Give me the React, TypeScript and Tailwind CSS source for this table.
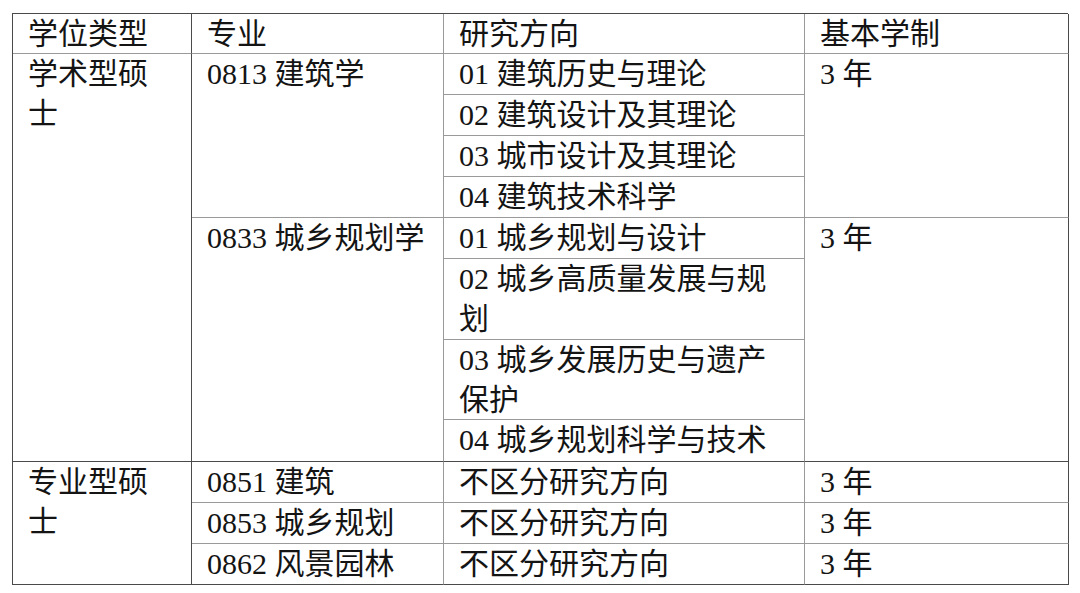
import React from "react";

const font = { fontFamily: '"Liberation Serif", "Noto Sans CJK SC", serif' };

function Cell({
  className = "",
  children,
}: {
  className?: string;
  children?: React.ReactNode;
}) {
  return (
    <div
      className={`border-r border-b border-[#9a9a9a] pl-[15px] pr-2 text-[30px] leading-[40px] font-normal text-[#141414] whitespace-nowrap ${className}`}
      style={font}
    >
      {children}
    </div>
  );
}

export default function App() {
  return (
    <div className="w-[1080px] h-[593px] bg-white pt-[13px] pl-[12px]" style={font}>
      <div className="grid grid-cols-[179px_252px_361px_264px] grid-rows-[40px_41px_41px_41px_41px_41px_81px_80px_42px_41px_41px_41px] w-[1056px] border-l border-t border-[#4a4a4a]">
        {/* header */}
        <Cell className="border-r-[#4a4a4a]">学位类型</Cell>
        <Cell>专业</Cell>
        <Cell>研究方向</Cell>
        <Cell className="border-r-[#4a4a4a]">基本学制</Cell>

        {/* 学术型硕士 */}
        <Cell className="col-start-1 row-start-2 row-span-8 border-r-[#4a4a4a] border-b-[#4a4a4a]">
          学术型硕
          <br />士
        </Cell>
        <Cell className="col-start-2 row-start-2 row-span-4">0813 建筑学</Cell>
        <Cell className="col-start-3 row-start-2">01 建筑历史与理论</Cell>
        <Cell className="col-start-3 row-start-3">02 建筑设计及其理论</Cell>
        <Cell className="col-start-3 row-start-4">03 城市设计及其理论</Cell>
        <Cell className="col-start-3 row-start-5">04 建筑技术科学</Cell>
        <Cell className="col-start-4 row-start-2 row-span-4 border-r-[#4a4a4a]">3 年</Cell>

        <Cell className="col-start-2 row-start-6 row-span-4 border-b-[#4a4a4a]">0833 城乡规划学</Cell>
        <Cell className="col-start-3 row-start-6">01 城乡规划与设计</Cell>
        <Cell className="col-start-3 row-start-7">
          02 城乡高质量发展与规
          <br />划
        </Cell>
        <Cell className="col-start-3 row-start-8">
          03 城乡发展历史与遗产
          <br />
          保护
        </Cell>
        <Cell className="col-start-3 row-start-9 border-b-[#4a4a4a]">04 城乡规划科学与技术</Cell>
        <Cell className="col-start-4 row-start-6 row-span-4 border-r-[#4a4a4a] border-b-[#4a4a4a]">3 年</Cell>

        {/* 专业型硕士 */}
        <Cell className="col-start-1 row-start-10 row-span-3 border-r-[#4a4a4a] border-b-[#4a4a4a]">
          专业型硕
          <br />士
        </Cell>
        <Cell className="col-start-2 row-start-10">0851 建筑</Cell>
        <Cell className="col-start-3 row-start-10">不区分研究方向</Cell>
        <Cell className="col-start-4 row-start-10 border-r-[#4a4a4a]">3 年</Cell>
        <Cell className="col-start-2 row-start-11">0853 城乡规划</Cell>
        <Cell className="col-start-3 row-start-11">不区分研究方向</Cell>
        <Cell className="col-start-4 row-start-11 border-r-[#4a4a4a]">3 年</Cell>
        <Cell className="col-start-2 row-start-12 border-b-[#4a4a4a]">0862 风景园林</Cell>
        <Cell className="col-start-3 row-start-12 border-b-[#4a4a4a]">不区分研究方向</Cell>
        <Cell className="col-start-4 row-start-12 border-r-[#4a4a4a] border-b-[#4a4a4a]">3 年</Cell>
      </div>
    </div>
  );
}
